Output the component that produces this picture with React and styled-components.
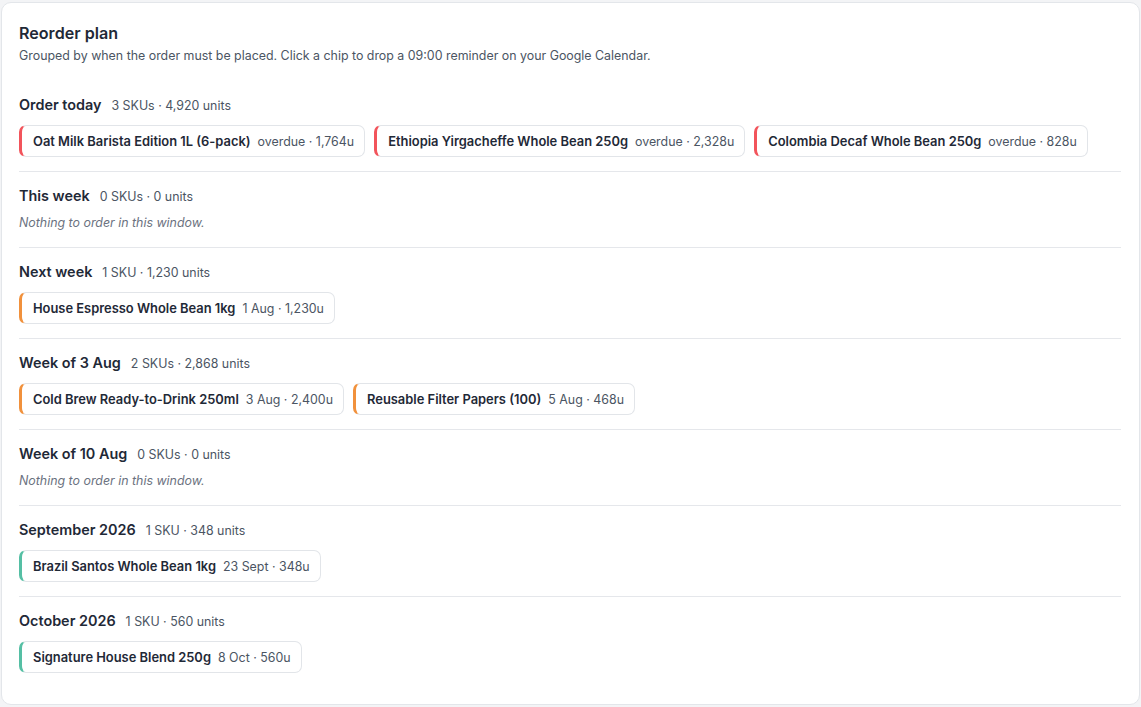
import React from "react";
import styled, { createGlobalStyle } from "styled-components";

const GlobalStyle = createGlobalStyle`
  html, body {
    margin: 0;
    padding: 0;
    background: #f3f4f6;
  }
  body {
    font-family: Inter, "Noto Sans", "Liberation Sans", sans-serif;
    color: #1f2937;
  }
`;

const Card = styled.section`
  margin: 2px 1px 2px 1px;
  height: 703px;
  box-sizing: border-box;
  background: #ffffff;
  border: 1px solid #e3e6ea;
  border-radius: 10px;
  padding: 19px 18px 18px 17px;
`;

const Title = styled.h2`
  margin: 0;
  font-size: 16.1px;
  line-height: 22px;
  font-weight: 600;
  color: #1f2937;
`;

const Subtitle = styled.p`
  margin: 4px 0 17px;
  font-size: 12.4px;
  line-height: 16px;
  color: #4b5563;
`;

const Group = styled.div`
  padding: 14px 0 14px;
  border-bottom: 1px solid #e5e7eb;
  &:first-of-type {
    padding-top: 14px;
  }
  &:last-child {
    border-bottom: 0;
  }
`;

const GroupHead = styled.div`
  display: flex;
  align-items: baseline;
  gap: 10px;
  height: 20px;
  line-height: 20px;
`;

const GroupName = styled.span`
  font-size: 14.4px;
  font-weight: 600;
  color: #1f2937;
`;

const GroupMeta = styled.span`
  font-size: 12.4px;
  color: #4b5563;
`;

const Chips = styled.div`
  display: flex;
  flex-wrap: wrap;
  gap: 9px;
  margin-top: 10px;
`;

const Chip = styled.button`
  display: inline-flex;
  align-items: center;
  gap: 7px;
  height: 32px;
  box-sizing: border-box;
  padding: 0 10px 0 11px;
  background: #ffffff;
  border: 1px solid #e2e5e9;
  border-left: 3px solid ${(p) => p.tone};
  border-radius: 7px;
  font-family: inherit;
  cursor: pointer;
`;

const ChipName = styled.span`
  font-size: 12.9px;
  font-weight: 600;
  color: #1f2937;
`;

const ChipMeta = styled.span`
  font-size: 12.4px;
  color: #4b5563;
`;

const Empty = styled.p`
  margin: 8px 0 1px;
  font-size: 12.4px;
  line-height: 18px;
  font-style: italic;
  color: #6b7280;
`;

const RED = "#f2545b";
const ORANGE = "#f1913c";
const TEAL = "#55bfa4";

const groups = [
  {
    name: "Order today",
    meta: "3 SKUs · 4,920 units",
    items: [
      ["Oat Milk Barista Edition 1L (6-pack)", "overdue · 1,764u", RED],
      ["Ethiopia Yirgacheffe Whole Bean 250g", "overdue · 2,328u", RED],
      ["Colombia Decaf Whole Bean 250g", "overdue · 828u", RED],
    ],
  },
  { name: "This week", meta: "0 SKUs · 0 units", items: [] },
  {
    name: "Next week",
    meta: "1 SKU · 1,230 units",
    items: [["House Espresso Whole Bean 1kg", "1 Aug · 1,230u", ORANGE]],
  },
  {
    name: "Week of 3 Aug",
    meta: "2 SKUs · 2,868 units",
    items: [
      ["Cold Brew Ready-to-Drink 250ml", "3 Aug · 2,400u", ORANGE],
      ["Reusable Filter Papers (100)", "5 Aug · 468u", ORANGE],
    ],
  },
  { name: "Week of 10 Aug", meta: "0 SKUs · 0 units", items: [] },
  {
    name: "September 2026",
    meta: "1 SKU · 348 units",
    items: [["Brazil Santos Whole Bean 1kg", "23 Sept · 348u", TEAL]],
  },
  {
    name: "October 2026",
    meta: "1 SKU · 560 units",
    items: [["Signature House Blend 250g", "8 Oct · 560u", TEAL]],
  },
];

export default function App() {
  return (
    <>
      <GlobalStyle />
      <Card>
        <Title>Reorder plan</Title>
        <Subtitle>
          Grouped by when the order must be placed. Click a chip to drop a 09:00
          reminder on your Google Calendar.
        </Subtitle>
        {groups.map((g) => (
          <Group key={g.name}>
            <GroupHead>
              <GroupName>{g.name}</GroupName>
              <GroupMeta>{g.meta}</GroupMeta>
            </GroupHead>
            {g.items.length ? (
              <Chips>
                {g.items.map(([name, meta, tone]) => (
                  <Chip key={name} tone={tone}>
                    <ChipName>{name}</ChipName>
                    <ChipMeta>{meta}</ChipMeta>
                  </Chip>
                ))}
              </Chips>
            ) : (
              <Empty>Nothing to order in this window.</Empty>
            )}
          </Group>
        ))}
      </Card>
    </>
  );
}
